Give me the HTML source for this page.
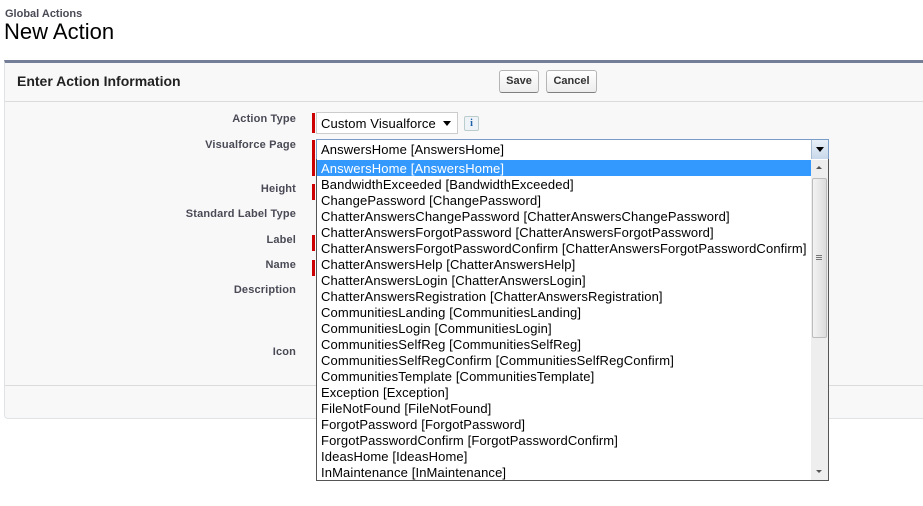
<!DOCTYPE html>
<html><head><meta charset="utf-8"><style>
*{box-sizing:border-box;margin:0;padding:0}
body{width:923px;height:506px;background:#fff;font-family:"Liberation Sans",Arial,sans-serif;position:relative;overflow:hidden;color:#000}
.abs{position:absolute}
.crumb{left:5px;top:8px;font-size:11px;color:#4a4a56;font-weight:bold}
.title{left:4px;top:19px;font-size:22px;color:#000}
.panel{left:4px;top:60px;width:930px;height:359px;background:#f8f8f8;border-top:3px solid #747e96;border-left:1px solid #e0e3e5;border-bottom:1px solid #e0e3e5;border-radius:0 0 4px 4px}
.hline{left:5px;width:920px;height:1px;background:#dbdbdb}
.ph{left:17px;top:73px;font-size:14px;font-weight:bold;color:#222}
.btn{top:70px;height:23px;border:1px solid #b5b5b5;border-bottom-color:#7f7f7f;border-radius:3px;background:linear-gradient(#fff,#ededed);font-size:11px;font-weight:bold;color:#333;text-align:center;line-height:21px}
.lbl{right:627px;font-size:11px;font-weight:bold;color:#4a4a56;text-align:right;white-space:nowrap;letter-spacing:0.15px}
.req{left:312px;width:3px;background:#c00}
.sel1{left:316px;top:112px;width:142px;height:22px;background:#fff;border:1px solid #ccc;font-size:13px;padding:3px 4px;line-height:15px;letter-spacing:0.13px}
.info{left:464px;top:116px;width:15px;height:15px;border:1px solid #bcc;border-radius:2px;background:#eef3f7;color:#1a5fa8;font-size:10px;font-weight:bold;text-align:center;line-height:13px;font-family:"Liberation Serif",serif}
.sel2{left:316px;top:139px;width:513px;height:21px;background:#fff;border:1px solid #7a9cc7;font-size:13px;padding:2px 4px;line-height:16px;letter-spacing:0.13px}
.arr{left:811px;top:140px;width:17px;height:19px;background:linear-gradient(#e8f0f8,#c8d8ea);border-left:1px solid #a8bcd4}
.list{left:316px;top:159px;width:513px;height:322px;background:#fff;border:1px solid #555;border-top:none}
.item{position:absolute;left:0;width:495px;height:16px;font-size:13px;line-height:17px;padding-left:4px;white-space:nowrap;letter-spacing:0.13px}
.sb{left:811px;top:160px;width:17px;height:320px;background:#eee}
.thumb{left:812px;top:178px;width:15px;height:160px;background:linear-gradient(90deg,#f3f3f3,#dcdcdc);border:1px solid #bcbcbc;border-radius:2px}
</style></head><body>
<div class="abs crumb">Global Actions</div>
<div class="abs title">New Action</div>
<div class="abs panel"></div>
<div class="abs hline" style="top:101px"></div>
<div class="abs hline" style="top:385px"></div>
<div class="abs ph">Enter Action Information</div>
<div class="abs btn" style="left:499px;width:40px">Save</div>
<div class="abs btn" style="left:546px;width:51px">Cancel</div>

<div class="abs lbl" style="top:113px">Action Type</div>
<div class="abs lbl" style="top:139px">Visualforce Page</div>
<div class="abs lbl" style="top:183px">Height</div>
<div class="abs lbl" style="top:208px">Standard Label Type</div>
<div class="abs lbl" style="top:234px">Label</div>
<div class="abs lbl" style="top:259px">Name</div>
<div class="abs lbl" style="top:284px">Description</div>
<div class="abs lbl" style="top:346px">Icon</div>

<div class="abs req" style="top:113px;height:20px"></div>
<div class="abs req" style="top:140px;height:36px"></div>
<div class="abs req" style="top:184px;height:16px"></div>
<div class="abs req" style="top:235px;height:16px"></div>
<div class="abs req" style="top:260px;height:16px"></div>

<div class="abs sel1">Custom Visualforce<span style="position:absolute;right:6px;top:8px;border:4px solid transparent;border-top:5px solid #000;border-bottom:0"></span></div>
<div class="abs info">i</div>

<div class="abs sel2">AnswersHome [AnswersHome]</div>
<div class="abs arr"><span style="position:absolute;left:4px;top:7px;border:4px solid transparent;border-top:5px solid #000;border-bottom:0"></span></div>

<div class="abs list">
<div class="item" style="top:1px;background:#3399ff;color:#fff">AnswersHome [AnswersHome]</div>
<div class="item" style="top:17px">BandwidthExceeded [BandwidthExceeded]</div>
<div class="item" style="top:33px">ChangePassword [ChangePassword]</div>
<div class="item" style="top:49px">ChatterAnswersChangePassword [ChatterAnswersChangePassword]</div>
<div class="item" style="top:65px">ChatterAnswersForgotPassword [ChatterAnswersForgotPassword]</div>
<div class="item" style="top:81px">ChatterAnswersForgotPasswordConfirm [ChatterAnswersForgotPasswordConfirm]</div>
<div class="item" style="top:97px">ChatterAnswersHelp [ChatterAnswersHelp]</div>
<div class="item" style="top:113px">ChatterAnswersLogin [ChatterAnswersLogin]</div>
<div class="item" style="top:129px">ChatterAnswersRegistration [ChatterAnswersRegistration]</div>
<div class="item" style="top:145px">CommunitiesLanding [CommunitiesLanding]</div>
<div class="item" style="top:161px">CommunitiesLogin [CommunitiesLogin]</div>
<div class="item" style="top:177px">CommunitiesSelfReg [CommunitiesSelfReg]</div>
<div class="item" style="top:193px">CommunitiesSelfRegConfirm [CommunitiesSelfRegConfirm]</div>
<div class="item" style="top:209px">CommunitiesTemplate [CommunitiesTemplate]</div>
<div class="item" style="top:225px">Exception [Exception]</div>
<div class="item" style="top:241px">FileNotFound [FileNotFound]</div>
<div class="item" style="top:257px">ForgotPassword [ForgotPassword]</div>
<div class="item" style="top:273px">ForgotPasswordConfirm [ForgotPasswordConfirm]</div>
<div class="item" style="top:289px">IdeasHome [IdeasHome]</div>
<div class="item" style="top:305px">InMaintenance [InMaintenance]</div>
</div>
<div class="abs sb"></div>
<div class="abs" style="left:816px;top:166px;border:3px solid transparent;border-bottom:3px solid #555;border-top:0"></div>
<div class="abs" style="left:816px;top:470px;border:3px solid transparent;border-top:3px solid #555;border-bottom:0"></div>
<div class="abs thumb"></div>
<div class="abs" style="left:816px;top:255px;width:6px;height:5px;border-top:1px solid #777;border-bottom:1px solid #777"><div style="margin-top:1px;height:1px;background:#777"></div></div>
</body></html>
